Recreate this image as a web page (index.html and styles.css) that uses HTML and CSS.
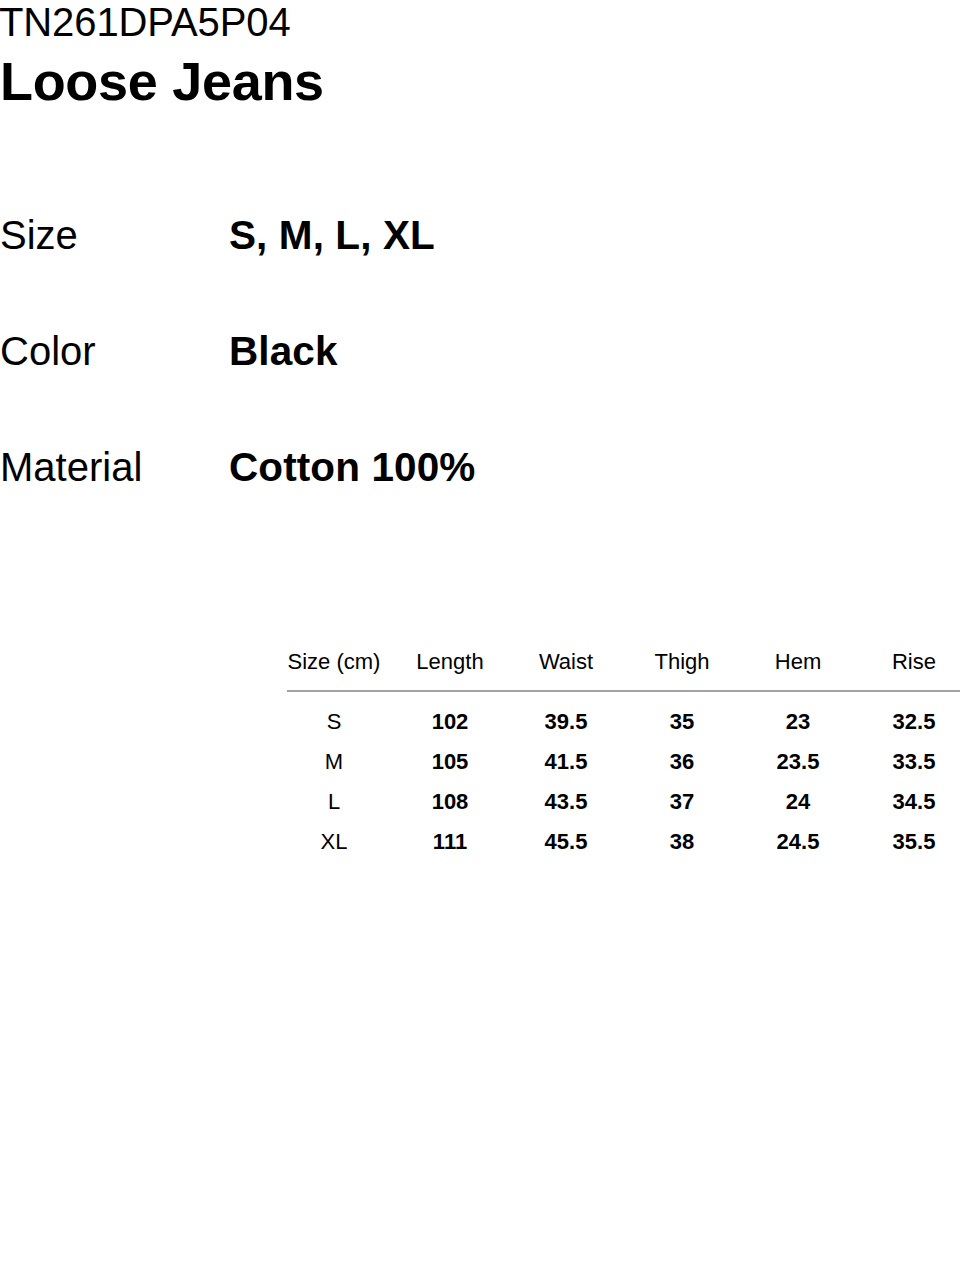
FILE: index.html
```html
<!DOCTYPE html>
<html lang="en">
<head>
<meta charset="utf-8">
<title>Loose Jeans</title>
<link rel="stylesheet" href="styles.css">
</head>
<body>
<div class="page">
  <div class="code">TN261DPA5P04</div>
  <h1 class="title">Loose Jeans</h1>

  <div class="specs">
    <div class="spec"><div class="label">Size</div><div class="value">S, M, L, XL</div></div>
    <div class="spec"><div class="label">Color</div><div class="value">Black</div></div>
    <div class="spec"><div class="label">Material</div><div class="value">Cotton 100%</div></div>
  </div>

  <div class="chart">
    <div class="row head">
      <div>Size (cm)</div><div>Length</div><div>Waist</div><div>Thigh</div><div>Hem</div><div>Rise</div>
    </div>
    <div class="rule"></div>
    <div class="body">
      <div class="row"><div class="sz">S</div><div>102</div><div>39.5</div><div>35</div><div>23</div><div>32.5</div></div>
      <div class="row"><div class="sz">M</div><div>105</div><div>41.5</div><div>36</div><div>23.5</div><div>33.5</div></div>
      <div class="row"><div class="sz">L</div><div>108</div><div>43.5</div><div>37</div><div>24</div><div>34.5</div></div>
      <div class="row"><div class="sz">XL</div><div>111</div><div>45.5</div><div>38</div><div>24.5</div><div>35.5</div></div>
    </div>
  </div>
</div>
</body>
</html>
```

FILE: styles.css
```css
html, body {
  margin: 0;
  padding: 0;
  background: #ffffff;
  overflow: hidden;
}

.page {
  width: 960px;
  height: 1281px;
  overflow: hidden;
  color: #000;
  font-family: "Liberation Sans", Arial, Helvetica, sans-serif;
}

.code {
  font-size: 40px;
  line-height: 44px;
  letter-spacing: -0.1px;
  margin-left: -1px;
}

.title {
  margin: 7px 0 0 0;
  font-size: 54px;
  line-height: 60px;
  font-weight: 700;
  letter-spacing: -0.3px;
}

.specs {
  margin-top: 66px;
  display: flex;
  flex-direction: column;
}

.spec {
  display: flex;
  align-items: baseline;
  height: 116px;
  line-height: 116px;
}

.label {
  width: 229px;
  font-size: 40px;
}

.value {
  font-size: 40.5px;
  font-weight: 700;
  letter-spacing: 0.1px;
}

.chart {
  margin-top: 117px;
  margin-left: 276px;
}

.row {
  display: grid;
  grid-template-columns: repeat(6, 116px);
  height: 40px;
  line-height: 40px;
  font-size: 22px;
  text-align: center;
  white-space: nowrap;
}

.rule {
  margin: 8px 0 0 11px;
  width: 673px;
  height: 2px;
  background: #a3a3a3;
}

.body {
  margin-top: 10px;
}

.body .row {
  font-weight: 700;
}

.body .row .sz {
  font-weight: 400;
}
```
